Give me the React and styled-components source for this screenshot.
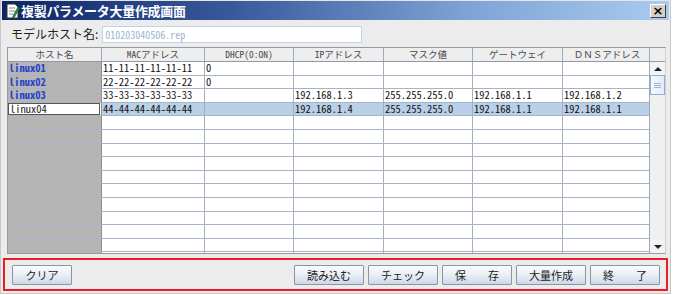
import React from 'react';
import styled, { createGlobalStyle } from 'styled-components';

const GlobalStyle = createGlobalStyle`
  html, body {
    margin: 0;
    padding: 0;
    background: #fff;
  }
`;

const jp = `"Noto Sans CJK JP", "Noto Sans", sans-serif`;
const mono = `"Noto Sans Mono CJK JP", "Liberation Mono", monospace`;

const columns = [
  { key: 'host', title: 'ホスト名', width: 94 },
  { key: 'mac', title: 'MACアドレス', width: 103 },
  { key: 'dhcp', title: 'DHCP(0:ON)', width: 89 },
  { key: 'ip', title: 'IPアドレス', width: 90 },
  { key: 'mask', title: 'マスク値', width: 89 },
  { key: 'gw', title: 'ゲートウェイ', width: 90 },
  { key: 'dns', title: 'ＤＮＳアドレス', width: 89 },
];

const rows = [
  { host: 'linux01', mac: '11-11-11-11-11-11', dhcp: '0' },
  { host: 'linux02', mac: '22-22-22-22-22-22', dhcp: '0' },
  { host: 'linux03', mac: '33-33-33-33-33-33', ip: '192.168.1.3', mask: '255.255.255.0', gw: '192.168.1.1', dns: '192.168.1.2' },
  { host: 'linux04', mac: '44-44-44-44-44-44', ip: '192.168.1.4', mask: '255.255.255.0', gw: '192.168.1.1', dns: '192.168.1.1', selected: true, editing: true },
  ...Array.from({ length: 11 }, () => ({})),
];

const gridTemplate = columns.map((c) => `${c.width}px`).join(' ');

const DocIcon = () => (
  <svg width="15" height="16" viewBox="0 0 15 16">
    <path d="M2 1h8l3 3v11H2z" fill="#fff" stroke="#333" strokeWidth="1" />
    <path d="M4 5h6M4 8h6M4 11h4" stroke="#888" strokeWidth="1" />
    <path d="M8 13l5-9 1.5 1-5 9-2 1z" fill="#2c9a3a" stroke="#145a1e" strokeWidth="0.7" />
  </svg>
);

const App = () => {
  return (
    <>
      <GlobalStyle />
      <Window>
        <TitleBar>
          <TitleLeft>
            <DocIcon />
            <TitleText>複製パラメータ大量作成画面</TitleText>
          </TitleLeft>
          <CloseButton>×</CloseButton>
        </TitleBar>

        <ModelRow>
          <Label>モデルホスト名:</Label>
          <ModelInput>010203040506.rep</ModelInput>
        </ModelRow>

        <TableFrame>
          <GridArea>
            <HeaderRow>
              {columns.map((c) => (
                <HeaderCell key={c.key}>{c.title}</HeaderCell>
              ))}
            </HeaderRow>
            <Body>
              {rows.map((r, i) => (
                <Row key={i}>
                  {columns.map((c) =>
                    c.key === 'host' ? (
                      <HostCell key={c.key} $editing={r.editing}>
                        {r.editing ? <EditBox>{r.host}</EditBox> : r.host}
                      </HostCell>
                    ) : (
                      <Cell key={c.key} $selected={r.selected}>
                        {r[c.key] || ''}
                      </Cell>
                    )
                  )}
                </Row>
              ))}
            </Body>
          </GridArea>
          <ScrollColumn>
            <Corner />
            <ScrollBar>
              <ArrowButton>
                <Triangle $up />
              </ArrowButton>
              <Thumb>
                <Grip />
                <Grip />
                <Grip />
              </Thumb>
              <Track />
              <ArrowButton>
                <Triangle />
              </ArrowButton>
            </ScrollBar>
          </ScrollColumn>
        </TableFrame>

        <ButtonPanel>
          <Button $w={60}>クリア</Button>
          <RightButtons>
            <Button>読み込む</Button>
            <Button>チェック</Button>
            <Button>保　　存</Button>
            <Button>大量作成</Button>
            <Button>終　　了</Button>
          </RightButtons>
        </ButtonPanel>
      </Window>
    </>
  );
};

const Window = styled.div`
  width: 671px;
  height: 294px;
  box-sizing: border-box;
  background: #ececec;
  border: 1px solid #c8c8c8;
  border-top-color: #e6e6e6;
  display: flex;
  flex-direction: column;
  font-family: ${jp};
  overflow: hidden;
`;

const TitleBar = styled.div`
  height: 19px;
  margin: 0 1px;
  background: linear-gradient(to right, #0c2466 0%, #3a5a9c 35%, #7fa3d6 70%, #a9cbef 100%);
  display: flex;
  align-items: center;
  justify-content: space-between;
  padding: 0 3px 0 3px;
`;

const TitleLeft = styled.div`
  display: flex;
  align-items: center;
  gap: 1px;
`;

const TitleText = styled.span`
  color: #fff;
  font-weight: bold;
  font-size: 13px;
  line-height: 16px;
  letter-spacing: -0.3px;
`;

const CloseButton = styled.div`
  width: 14px;
  height: 12px;
  background: #d4d0c8;
  border: 1px solid;
  border-color: #fff #404040 #404040 #fff;
  display: flex;
  align-items: center;
  justify-content: center;
  font-family: "DejaVu Sans", sans-serif;
  font-weight: bold;
  font-size: 13px;
  line-height: 1;
  color: #000;
`;

const ModelRow = styled.div`
  height: 27px;
  display: flex;
  align-items: center;
  padding-left: 10px;
  gap: 4px;
`;

const Label = styled.span`
  font-size: 12px;
  color: #222;
`;

const ModelInput = styled.div`
  width: 256px;
  height: 15px;
  border: 1px solid #bcd4ec;
  background: #fff;
  color: #9cb4cc;
  font-family: ${mono};
  font-size: 10px;
  line-height: 15px;
  padding-left: 2px;
  box-sizing: content-box;
  margin-top: 1px;
`;

const TableFrame = styled.div`
  margin: 0 4px 0 6px;
  display: flex;
  border: 1px solid #9a9a9a;
  border-right-color: #d0d0d0;
  height: 207px;
  box-sizing: border-box;
  background: #fff;
`;

const GridArea = styled.div`
  display: flex;
  flex-direction: column;
  overflow: hidden;
`;

const HeaderRow = styled.div`
  display: grid;
  grid-template-columns: ${gridTemplate};
  height: 13px;
  background: #eeeeee;
  border-bottom: 1px solid #8d9aab;
`;

const HeaderCell = styled.div`
  border-right: 1px solid #9eaabb;
  font-family: ${mono};
  font-size: 9.5px;
  line-height: 13px;
  color: #4a4a4a;
  white-space: nowrap;
  text-align: center;
`;

const Body = styled.div`
  flex: 1;
  overflow: hidden;
`;

const Row = styled.div`
  display: grid;
  grid-template-columns: ${gridTemplate};
  height: 13.6px;
  box-sizing: border-box;
  border-bottom: 1px solid #a8b4c6;
`;

const Cell = styled.div`
  border-right: 1px solid #a2afc1;
  background: ${(p) => (p.$selected ? '#b9d0e8' : '#fff')};
  font-family: ${mono};
  font-size: 10.5px;
  line-height: 12.6px;
  color: #111;
  padding-left: 1px;
  white-space: nowrap;
`;

const HostCell = styled.div`
  border-right: 1px solid #8d8d8d;
  background: ${(p) => (p.$editing ? '#fff' : '#b5b5b5')};
  font-family: ${mono};
  font-size: 10.5px;
  line-height: 12.6px;
  font-weight: bold;
  color: #2541c8;
  padding-left: 1px;
  white-space: nowrap;
  display: flex;
`;

const EditBox = styled.div`
  flex: 1;
  margin: 0 1px 0 -1px;
  border: 1px solid #555;
  box-sizing: border-box;
  padding-left: 1px;
  font-weight: normal;
  color: #222;
  line-height: 10.6px;
  background: #fff;
`;

const ScrollColumn = styled.div`
  width: 15px;
  display: flex;
  flex-direction: column;
  border-left: 1px solid #9eaabb;
`;

const Corner = styled.div`
  height: 13px;
  background: #eeeeee;
  border-bottom: 1px solid #8d9aab;
`;

const ScrollBar = styled.div`
  flex: 1;
  display: flex;
  flex-direction: column;
  background: #eef0f2;
`;

const ArrowButton = styled.div`
  height: 13px;
  display: flex;
  align-items: center;
  justify-content: center;
  background: #f2f3f5;
`;

const Triangle = styled.div`
  width: 0;
  height: 0;
  border-left: 4px solid transparent;
  border-right: 4px solid transparent;
  ${(p) => (p.$up ? 'border-bottom: 4px solid #222;' : 'border-top: 4px solid #222;')}
`;

const Thumb = styled.div`
  height: 20px;
  border: 1px solid #8fb0d6;
  box-sizing: border-box;
  background: linear-gradient(to right, #f6f9fd, #e3ecf6);
  display: flex;
  flex-direction: column;
  align-items: center;
  justify-content: center;
  gap: 1px;
`;

const Grip = styled.div`
  width: 7px;
  height: 1px;
  background: #9ab6d8;
`;

const Track = styled.div`
  flex: 1;
`;

const ButtonPanel = styled.div`
  margin: 4px 2px 0 2px;
  height: 33px;
  box-sizing: border-box;
  border: 2px solid #ec1c24;
  display: flex;
  align-items: center;
  justify-content: space-between;
  padding: 0 6px 0 7px;
`;

const RightButtons = styled.div`
  display: flex;
  gap: 4px;
`;

const Button = styled.div`
  width: ${(p) => p.$w || 70}px;
  height: 20px;
  box-sizing: border-box;
  border: 1px solid #8796ab;
  border-radius: 1px;
  background: linear-gradient(to bottom, #fbfcfd 0%, #e9eef4 50%, #cdd8e6 100%);
  display: flex;
  align-items: center;
  justify-content: center;
  font-size: 11px;
  color: #222;
  white-space: pre;
`;

export default App;
